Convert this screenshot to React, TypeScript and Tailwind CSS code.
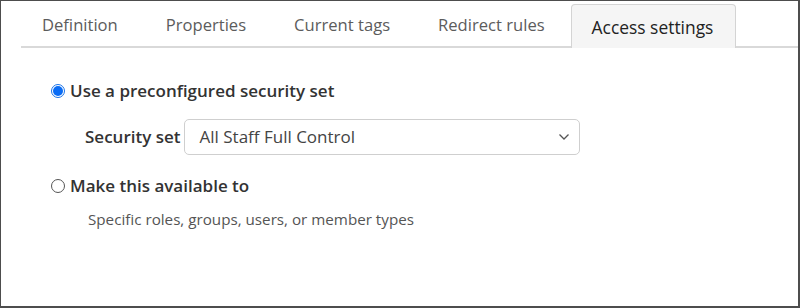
import React from "react";

const tabs = ["Definition", "Properties", "Current tags", "Redirect rules"];

export default function App() {
  return (
    <div
      className="w-[800px] h-[308px] bg-white border-l border-t border-r-2 border-b-2 border-[#4d4d4d] overflow-hidden"
      style={{ fontFamily: '"Open Sans", sans-serif' }}
    >
      <div className="flex items-end h-[47px] ml-[20px] border-b-2 border-[#d9d9d9] pt-[3px]">
        {tabs.map((t, i) => (
          <div
            key={t}
            className={`h-[44px] pt-[3px] flex items-center text-[16.6px] text-[#5c5c5c] ${
              i === 0 ? "pl-[21px] pr-[24px]" : "px-[24px]"
            }`}
          >
            {t}
          </div>
        ))}
        <div className="h-[44px] -mb-[2px] ml-[2px] pl-[20px] pr-[22px] pt-[1px] flex items-center bg-[#f5f5f5] border border-b-0 border-[#d4d4d4] rounded-t-[4px] text-[17.4px] text-[#222]">
          Access settings
        </div>
      </div>
      <div className="pl-[50px] pt-[31px]">
        <label className="flex items-center h-[24px] text-[17px] font-semibold text-[#333]">
          <span className="w-[14px] h-[14px] rounded-full border border-[#1a73e8] flex items-center justify-center mr-[5px] bg-white">
            <span className="w-[10px] h-[10px] rounded-full bg-[#0a6cf5]" />
          </span>
          Use a preconfigured security set
        </label>
        <div className="flex items-center mt-[16px] pl-[34px]">
          <span className="text-[17px] font-semibold text-[#333] mr-[3px]">Security set</span>
          <div className="w-[396px] h-[36px] border border-[#cfcfcf] rounded-[5px] flex items-center justify-between pl-[15px] pr-[9px]">
            <span className="text-[17px] text-[#444]">All Staff Full Control</span>
            <svg width="12" height="8" viewBox="0 0 12 8" fill="none">
              <path d="M1.5 1.5 L6 6 L10.5 1.5" stroke="#555" strokeWidth="1.3" />
            </svg>
          </div>
        </div>
        <label className="flex items-center h-[24px] mt-[19px] text-[17px] font-semibold text-[#333]">
          <span className="w-[14px] h-[14px] rounded-full border border-[#555] mr-[5px] bg-white" />
          Make this available to
        </label>
        <div className="mt-[10px] pl-[37px] text-[15.2px] text-[#555]">
          Specific roles, groups, users, or member types
        </div>
      </div>
    </div>
  );
}
